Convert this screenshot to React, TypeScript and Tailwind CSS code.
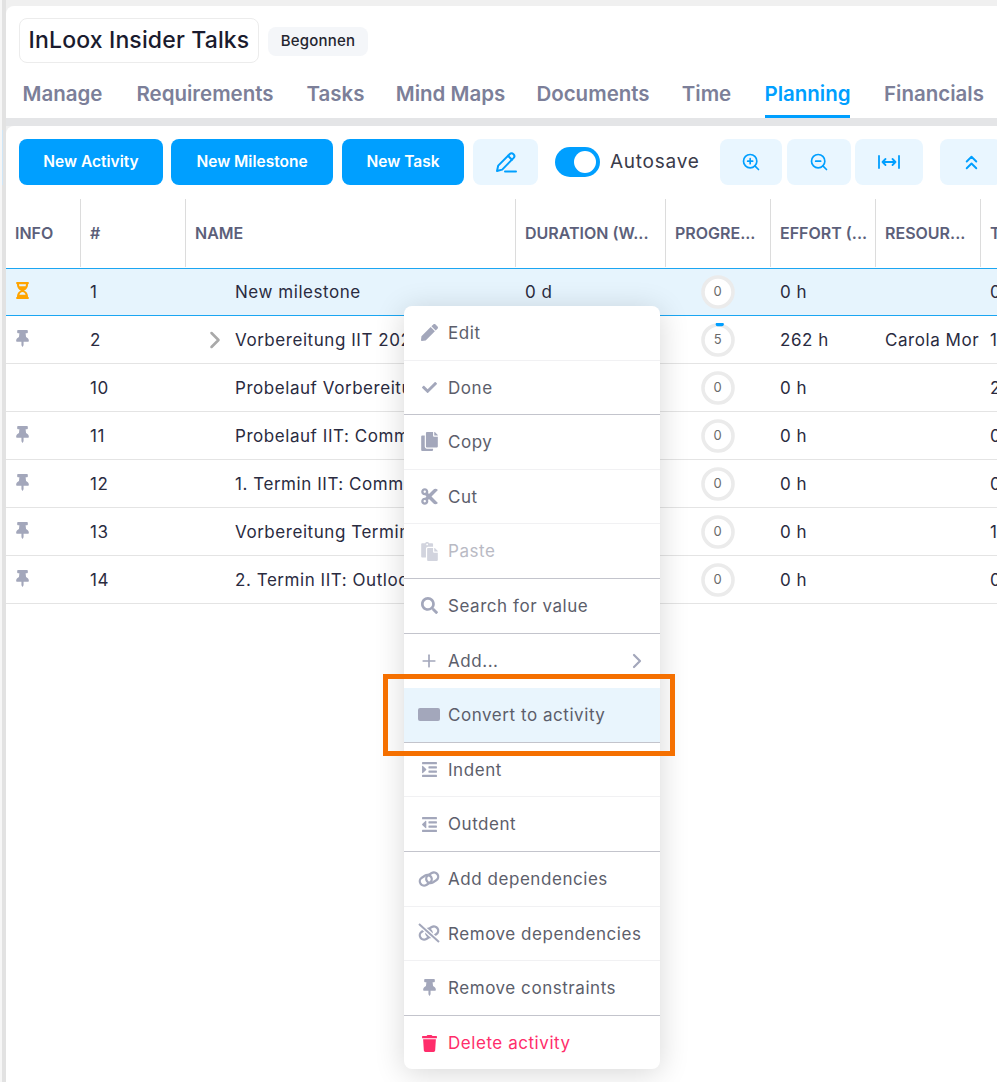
import React from "react";
import { FaPen, FaCheck, FaCopy, FaPaste, FaSearch, FaIndent, FaOutdent, FaThumbtack, FaTrash, FaHourglassHalf, FaCut } from "react-icons/fa";
import { ChevronRight, ChevronsUp, Plus, ZoomIn, ZoomOut } from "lucide-react";

const font = "font-['Inter','Liberation_Sans',sans-serif]";

const tabs = [
  { label: "Manage", w: "w-[79px]" },
  { label: "Requirements", w: "w-[136px]" },
  { label: "Tasks", w: "w-[55px]" },
  { label: "Mind Maps", w: "w-[105px]" },
  { label: "Documents", w: "w-[110px]" },
  { label: "Time", w: "w-[47px]" },
  { label: "Planning", w: "w-[85px]", active: true },
  { label: "Financials", w: "w-[98px]" },
];

const heads = [
  { t: "INFO", w: "w-[75px]", pl: "pl-[9px]" },
  { t: "#", w: "w-[105px]", pl: "pl-[9px]" },
  { t: "NAME", w: "w-[330px]", pl: "pl-[9px]" },
  { t: "DURATION (W...", w: "w-[150px]", pl: "pl-[9px]" },
  { t: "PROGRE...", w: "w-[105px]", pl: "pl-[9px]" },
  { t: "EFFORT (...", w: "w-[105px]", pl: "pl-[9px]" },
  { t: "RESOUR...", w: "w-[105px]", pl: "pl-[9px]" },
  { t: "T", w: "w-[16px]", pl: "pl-[9px]" },
];

const rows = [
  { n: "1", name: "New milestone", dur: "0 d", p: 0, eff: "0 h", res: "", last: "0", icon: "hour" },
  { n: "2", name: "Vorbereitung IIT 2024", dur: "", p: 5, eff: "262 h", res: "Carola Mor", last: "17", icon: "pin", chev: true },
  { n: "10", name: "Probelauf Vorbereitung", dur: "", p: 0, eff: "0 h", res: "", last: "2", icon: "" },
  { n: "11", name: "Probelauf IIT: Communication", dur: "", p: 0, eff: "0 h", res: "", last: "0", icon: "pin" },
  { n: "12", name: "1. Termin IIT: Communication", dur: "", p: 0, eff: "0 h", res: "", last: "0", icon: "pin" },
  { n: "13", name: "Vorbereitung Termin 1", dur: "", p: 0, eff: "0 h", res: "", last: "18", icon: "pin" },
  { n: "14", name: "2. Termin IIT: Outlook", dur: "", p: 0, eff: "0 h", res: "", last: "0", icon: "pin" },
];

function Ring({ v }: { v: number }) {
  return (
    <div className="relative flex h-[34px] w-[34px] items-center justify-center">
      <svg className="absolute inset-0" width="34" height="34" viewBox="0 0 34 34">
        <circle cx="17" cy="17" r="15" fill="#fff" stroke="#ebebeb" strokeWidth="3.6" />
        {v > 0 && <path d="M16.5 1.4 H21" fill="none" stroke="#009fff" strokeWidth="3.6" strokeLinecap="round" />}
      </svg>
      <span className="relative text-[13px] text-[#6a6a6a]">{v}</span>
    </div>
  );
}

function Chain({ cut }: { cut?: boolean }) {
  return (
    <svg width="22" height="20" viewBox="0 0 22 20" fill="none" stroke="currentColor" strokeWidth="2.3">
      <rect x="1.5" y="7" width="12.5" height="8.5" rx="4.2" transform="rotate(-32 7.7 11.2)" />
      <rect x="8" y="4.5" width="12.5" height="8.5" rx="4.2" transform="rotate(-32 14.2 8.8)" />
      {cut && <path d="M1 1 L21 19" stroke="#fff" strokeWidth="4.5" />}
      {cut && <path d="M1 1 L21 19" strokeWidth="2" />}
    </svg>
  );
}

function Pen() {
  return (
    <svg width="22" height="22" viewBox="0 0 22 22" fill="none" stroke="#009fff" strokeWidth="2" strokeLinecap="round" strokeLinejoin="round">
      <path d="M2 20 L3.2 14.6 L14.6 3.2 a2.7 2.7 0 0 1 3.9 3.9 L7.2 18.6 Z" />
      <path d="M13 4.8 L16.9 8.7" />
      <path d="M10 20.5 H21" />
    </svg>
  );
}

function Fit() {
  return (
    <svg width="24" height="16" viewBox="0 0 24 16" fill="none" stroke="#009fff" strokeWidth="1.8" strokeLinecap="round" strokeLinejoin="round">
      <path d="M2 2v12M22 2v12M5.5 8h13M8.5 5 5.5 8l3 3M15.5 5l3 3-3 3" />
    </svg>
  );
}

function Rect() {
  return <span className="block h-[13px] w-[22px] rounded-[2px] bg-[#a3a7bb]" />;
}

const menu = [
  { label: "Edit", icon: <FaPen size={17} />, line: "light" },
  { label: "Done", icon: <FaCheck size={15} />, line: "dark" },
  { label: "Copy", icon: <FaCopy size={19} />, line: "light" },
  { label: "Cut", icon: <FaCut size={19} />, line: "light" },
  { label: "Paste", icon: <FaPaste size={19} />, line: "dark", off: true },
  { label: "Search for value", icon: <FaSearch size={17} />, line: "dark" },
  { label: "Add...", icon: <Plus size={20} strokeWidth={2} />, line: "none", sub: true },
  { label: "Convert to activity", icon: <Rect />, line: "dark", hot: true },
  { label: "Indent", icon: <FaIndent size={17} />, line: "light" },
  { label: "Outdent", icon: <FaOutdent size={17} />, line: "dark" },
  { label: "Add dependencies", icon: <Chain />, line: "light" },
  { label: "Remove dependencies", icon: <Chain cut />, line: "light" },
  { label: "Remove constraints", icon: <FaThumbtack size={17} />, line: "dark" },
  { label: "Delete activity", icon: <FaTrash size={17} />, line: "none", danger: true },
];

const toolBtn = "flex h-[46px] shrink-0 items-center justify-center rounded-lg bg-[#009fff] text-[15.5px] font-semibold text-white";
const softBtn = "flex h-[46px] shrink-0 items-center justify-center rounded-lg bg-[#e9f6ff] text-[#009fff]";

export default function App() {
  return (
    <div className={`relative flex h-[1082px] w-[997px] overflow-hidden bg-[#f0f0f0] ${font}`}>
      <aside className="flex w-[6px] shrink-0 flex-col border-l-2 border-[#f6f6f6] bg-[#e2e2e2]">
        <div className="mt-[130px] h-[55px] w-[1px] bg-[#cfe6f7]" />
      </aside>
      <main className="flex min-w-0 flex-1 flex-col pt-[6px]">
        <header className="h-[112px] shrink-0 rounded-tl-lg bg-white pl-[13px] pt-[12px]">
          <div className="flex items-center">
            <h1 className="flex h-[45px] w-[240px] items-center justify-center rounded-lg border border-[#ececec] text-[23px] font-medium tracking-[0.15px] text-[#1a1b2e]">
              InLoox Insider Talks
            </h1>
            <span className="ml-[9px] mt-[2px] flex h-[29px] w-[100px] items-center justify-center rounded-lg bg-[#f4f6f9] text-[15px] font-medium tracking-[0.2px] text-[#24252f]">
              Begonnen
            </span>
          </div>
          <nav className="-ml-[9px] mt-[11px] flex h-[44px] gap-[35px] pl-[13px]">
            {tabs.map((t) => (
              <div
                key={t.label}
                className={`${t.w} flex h-full shrink-0 items-center justify-center whitespace-nowrap border-b-[3px] pb-[1px] text-[20.5px] font-semibold ${t.active ? "border-[#009fff] text-[#009fff]" : "border-transparent text-[#7c7f99]"}`}
              >
                {t.label}
              </div>
            ))}
          </nav>
        </header>
        <div className="h-[8px] shrink-0 bg-[#e4e5e7]" />
        <section className="flex min-h-0 flex-1 flex-col overflow-hidden rounded-tl-lg bg-white">
          <div className="flex h-[72px] shrink-0 items-start pl-[13px] pt-[13px]">
            <button className={`${toolBtn} w-[144px]`}>New Activity</button>
            <button className={`${toolBtn} ml-[8px] w-[162px]`}>New Milestone</button>
            <button className={`${toolBtn} ml-[9px] w-[122px]`}>New Task</button>
            <button className={`${softBtn} ml-[9px] w-[65px]`}><Pen /></button>
            <div className="ml-[17px] mt-[8px] flex h-[30px] w-[45px] shrink-0 items-center justify-end rounded-full bg-[#009fff] pr-[4px]">
              <span className="h-[22px] w-[22px] rounded-full bg-white" />
            </div>
            <span className="ml-[10px] mt-[8px] flex h-[30px] w-[88px] shrink-0 items-center whitespace-nowrap text-[19px] tracking-[0.75px] text-[#3a3b4a]">Autosave</span>
            <button className={`${softBtn} ml-[22px] w-[62px]`}><ZoomIn size={20} /></button>
            <button className={`${softBtn} ml-[5px] w-[64px]`}><ZoomOut size={20} /></button>
            <button className={`${softBtn} ml-[4px] w-[68px]`}><Fit /></button>
            <button className={`${softBtn} ml-[17px] w-[62px]`}><ChevronsUp size={23} /></button>
          </div>
          <div className="flex h-[70px] shrink-0 items-center">
            {heads.map((h, i) => (
              <div key={h.t} className={`${h.w} ${h.pl} flex h-[68px] shrink-0 items-center overflow-hidden whitespace-nowrap text-[16px] font-semibold text-[#5c5f7a] ${i < heads.length - 1 ? "border-r border-[#dcdcdc]" : ""}`}>
                {h.t}
              </div>
            ))}
          </div>
          {rows.map((r, i) => (
            <div
              key={r.n}
              className={`flex h-[48px] shrink-0 items-center text-[17px] tracking-[0.55px] text-[#2a2b3f] ${i === 0 ? "border-y border-[#1ba6f2] bg-[#e6f4fd]" : "border-b border-[#e4e4e4] pt-[1px]"}`}
            >
              <div className="flex w-[74px] shrink-0 pb-[3px] pl-[8px]">
                {r.icon === "hour" && <FaHourglassHalf size={17} className="text-[#ffa400]" />}
                {r.icon === "pin" && <FaThumbtack size={17} className="text-[#a3a7bb]" />}
              </div>
              <div className="w-[105px] shrink-0 pl-[10px] pt-[2px]">{r.n}</div>
              <div className="relative flex h-full w-[330px] shrink-0 items-center whitespace-nowrap pl-[50px]">
                {r.chev && <ChevronRight size={28} strokeWidth={2.2} className="absolute left-[16px] top-[9px] text-[#a9a9a9]" />}
                <span className={`block overflow-hidden pt-[2px] ${i === 0 ? "" : "max-w-[169px]"}`}>{r.name}</span>
              </div>
              <div className="w-[150px] shrink-0 pl-[10px] pt-[2px]">{r.dur}</div>
              <div className={`flex w-[105px] shrink-0 pl-[36px] ${i === 0 ? "" : "-mt-[1px]"}`}><Ring v={r.p} /></div>
              <div className="w-[105px] shrink-0 pl-[10px] pt-[2px]">{r.eff}</div>
              <div className="w-[105px] shrink-0 overflow-hidden whitespace-nowrap pl-[10px] pt-[2px]">{r.res}</div>
              <div className="w-[17px] shrink-0 overflow-hidden whitespace-nowrap pl-[10px] pt-[2px]">{r.last}</div>
            </div>
          ))}
        </section>
      </main>

      <div className="absolute left-[404px] top-[306px] h-[763px] w-[256px] overflow-hidden rounded-lg bg-white shadow-[0_4px_30px_rgba(0,0,0,0.16)]">
        {menu.map((m) => (
          <div
            key={m.label}
            className={`relative flex h-[54.6px] items-center whitespace-nowrap text-[17px] tracking-[0.55px] ${m.hot ? "bg-[#e9f5fd]" : ""} ${m.danger ? "text-[#ff2d6b]" : m.off ? "text-[#b9bac4]" : "text-[#5c5e6b]"} ${m.line === "dark" ? "border-b border-[#c3c4cc]" : m.line === "light" ? "border-b border-[#f1f1f3]" : ""}`}
          >
            <span className={`flex w-[44px] shrink-0 justify-center pl-[6px] ${m.danger ? "text-[#ff2d6b]" : m.off ? "text-[#d2d4de]" : "text-[#a3a7bb]"}`}>{m.icon}</span>
            <span className="pt-[2px]">{m.label}</span>
            {m.sub && <ChevronRight size={24} strokeWidth={2.2} className="absolute right-[11px] top-[15px] text-[#a3a7bb]" />}
          </div>
        ))}
      </div>
      <div className="pointer-events-none absolute left-[383px] top-[674px] h-[82px] w-[292px] border-[5px] border-[#f57000]" />
    </div>
  );
}
